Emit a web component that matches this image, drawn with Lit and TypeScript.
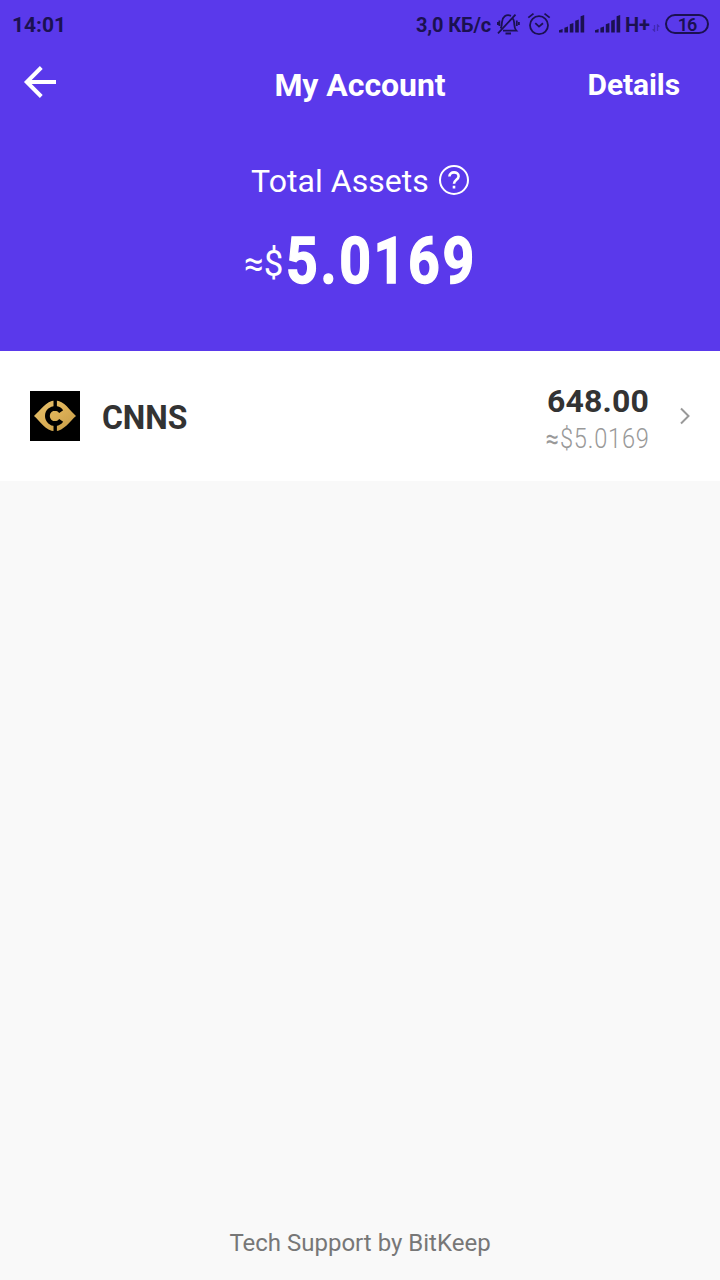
import { LitElement, html, css, svg } from "lit";
import { customElement } from "lit/decorators.js";

const BARS = [[0, 14, 3.5], [5.4, 11.5, 6], [10.8, 8, 9.5], [16.2, 4.5, 13], [21.6, 0, 17.5]];

@customElement("status-bar")
class StatusBar extends LitElement {
  static styles = css`
    :host { display: flex; height: 48px; align-items: center; box-sizing: border-box; padding: 0 11px 0 12px; color: #1b1151; font: 700 20px/24px Roboto, sans-serif; }
    .time { font-size: 21px; width: 60px; padding-top: 1px; white-space: nowrap; }
    .speed { margin-left: auto; padding-top: 1px; font-size: 20px; width: 81px; white-space: nowrap; letter-spacing: -0.15px; }
    svg { display: block; flex: none; }
    .clock { margin-left: 7px; }
    .sig { margin-left: 8px; }
    .sig2 { margin-left: 9px; }
    .net { margin-left: 3px; padding-top: 1px; font-size: 20px; width: 26px; }
    .data { margin: 7px 0 0 1px; }
    .battery { margin-left: 5px; width: 44px; height: 20px; border: 2px solid #1b1151; border-radius: 10px; box-sizing: border-box; font-size: 18px; line-height: 17px; text-align: center; letter-spacing: -1px; font-weight: 600; }
  `;
  signal(cls: string) {
    return html`<svg class=${cls} width="27" height="18" viewBox="0 0 27 18">
      ${BARS.map(([x, y, h]) => svg`<path fill="#1b1151" d="M${x} ${y + 1.2}l3.6-1.2v${h}h-3.6z"/>`)}
    </svg>`;
  }
  render() {
    return html`
      <span class="time">14:01</span>
      <span class="speed">3,0 КБ/с</span>
      <svg width="23" height="24" viewBox="0 0 23 24" fill="none" stroke="#1b1151" stroke-width="1.8">
        <path d="M6 18.7H19.3C17.2 16.5 17.4 14 17.2 11C17.1 9 16.5 7.5 15.8 6.5M14 3.8C9 1.8 5.3 5 5 10C4.9 12.5 4.7 14.5 3.7 16.5M1 21.3L18.5 2.7M8.5 21.5h5.5M2.4 8.5v5.5M19.8 8.5v5.5M.7 10v3M21.9 10v3"/>
      </svg>
      <svg class="clock" width="24" height="24" viewBox="0 0 24 24" fill="none" stroke="#1b1151" stroke-width="1.8">
        <circle cx="12" cy="13.2" r="9"/><path d="M8.3 11.2l3.7 3.4 4-3.4M1.3 5.6L6.5 1.6M22.7 5.6L17.5 1.6"/>
      </svg>
      ${this.signal("sig")}${this.signal("sig2")}
      <span class="net">H+</span>
      <svg class="data" width="8" height="8" viewBox="0 0 8 8" fill="none" stroke="#4229b2" stroke-width="1.3">
        <path d="M2.5 1v6L.7 5.3M5.5 7V1L7.3 2.7"/>
      </svg>
      <span class="battery">16</span>`;
  }
}

@customElement("app-root")
class AppRoot extends LitElement {
  static styles = css`
    :host { display: flex; flex-direction: column; height: 1280px; background: #f9f9f9; font-family: Roboto, sans-serif; overflow: hidden; }
    svg { display: block; flex: none; }
    .top { height: 351px; background: #5a39eb; color: #fff; }
    nav { display: grid; grid-template-columns: 160px 1fr 160px; height: 72px; align-items: center; }
    .back { margin: -4px 0 0 22px; }
    h1 { margin: 2px 0 0; font-size: 32px; line-height: 38px; font-weight: 700; text-align: center; letter-spacing: -0.05px; }
    .details { margin-top: 2px; text-align: right; padding-right: 40px; font-weight: 700; font-size: 30px; line-height: 36px; letter-spacing: -0.1px; }
    .label { display: flex; justify-content: center; align-items: center; height: 40px; margin-top: 40px; gap: 9px; font-size: 32px; line-height: 40px; padding-left: 1px; }
    .label span { padding-top: 2px; letter-spacing: 0.05px; }
    .total { display: flex; align-items: baseline; margin: 24px 0 0 244px; height: 76px; line-height: 76px; white-space: nowrap; }
    .approx { position: relative; top: -7px; font-size: 36px; width: 42px; transform-origin: left; transform: scaleX(0.97); }
    .big { font-size: 64px; font-weight: 700; letter-spacing: 3.1px; -webkit-text-stroke: 1.4px #fff; transform-origin: left; transform: scaleX(0.865); }
    .row { display: flex; align-items: center; height: 130px; box-sizing: border-box; padding: 0 28px 0 30px; background: #fff; color: #333; }
    .coin { margin-left: 22px; font-size: 32.5px; font-weight: 700; line-height: 38px; padding-top: 4px; transform-origin: left; transform: scaleX(0.98); }
    .amounts { margin-left: auto; text-align: right; padding-top: 7px; white-space: nowrap; }
    .qty { font-size: 32px; line-height: 38px; font-weight: 700; letter-spacing: 0.15px; }
    .fiat { font-size: 27px; line-height: 35px; padding-top: 2px; font-weight: 300; color: #999; letter-spacing: 0.9px; margin-right: -1px; transform-origin: right; transform: scaleX(0.875); }
    .fiat span { font-weight: 400; }
    .chev { margin-left: 29px; }
    footer { margin-top: auto; height: 74px; text-align: center; color: #777; font-size: 24px; line-height: 74px; }
  `;
  render() {
    return html`
      <div class="top">
        <status-bar></status-bar>
        <nav>
          <svg class="back" width="36" height="36" viewBox="0 0 36 36" fill="none" stroke="#fff" stroke-width="4">
            <path d="M19.3 3.5L4.8 18l14.5 14.5M5 18h29"/>
          </svg>
          <h1>My Account</h1>
          <span class="details">Details</span>
        </nav>
        <div class="label"><span>Total Assets</span>
          <svg width="32" height="32" viewBox="0 0 32 32" fill="none" stroke="#fff">
            <circle cx="16" cy="16" r="14" stroke-width="2"/>
            <path stroke-width="2.6" d="M11.4 12.6C11.4 7 20.6 7 20.6 12.2C20.6 15.7 16 15.7 16 19.7M16 21.7v2.8"/>
          </svg>
        </div>
        <div class="total"><span class="approx">≈$</span><span class="big">5.0169</span></div>
      </div>
      <div class="row">
        <svg width="50" height="50" viewBox="0 0 50 50">
          <defs><linearGradient id="gold" x1="0" y1="0" x2="1" y2="1"><stop offset="0" stop-color="#e5c16e"/><stop offset=".5" stop-color="#dcb056"/><stop offset="1" stop-color="#c39a47"/></linearGradient></defs>
          <rect width="50" height="50"/>
          <path fill="url(#gold)" d="M4 25C10 20 16 10 25 9.6S40 20 46 25C40 30 34 40 25 40.2S10 30 4 25Z"/>
          <path fill="none" stroke="#000" stroke-width="4.8" d="M31.2 20.6A7.6 7.6 0 1 0 31.2 29.4"/>
          <path fill="none" stroke="#000" stroke-width="3.4" d="M25.2 9V20M25.2 30v11"/>
        </svg>
        <span class="coin">CNNS</span>
        <div class="amounts"><div class="qty">648.00</div><div class="fiat"><span>≈</span>$5.0169</div></div>
        <svg class="chev" width="14" height="20" viewBox="0 0 14 20" fill="none" stroke="#999" stroke-width="2"><path d="M3 2.5l7.5 7.5L3 17.5"/></svg>
      </div>
      <footer>Tech Support by BitKeep</footer>`;
  }
}
